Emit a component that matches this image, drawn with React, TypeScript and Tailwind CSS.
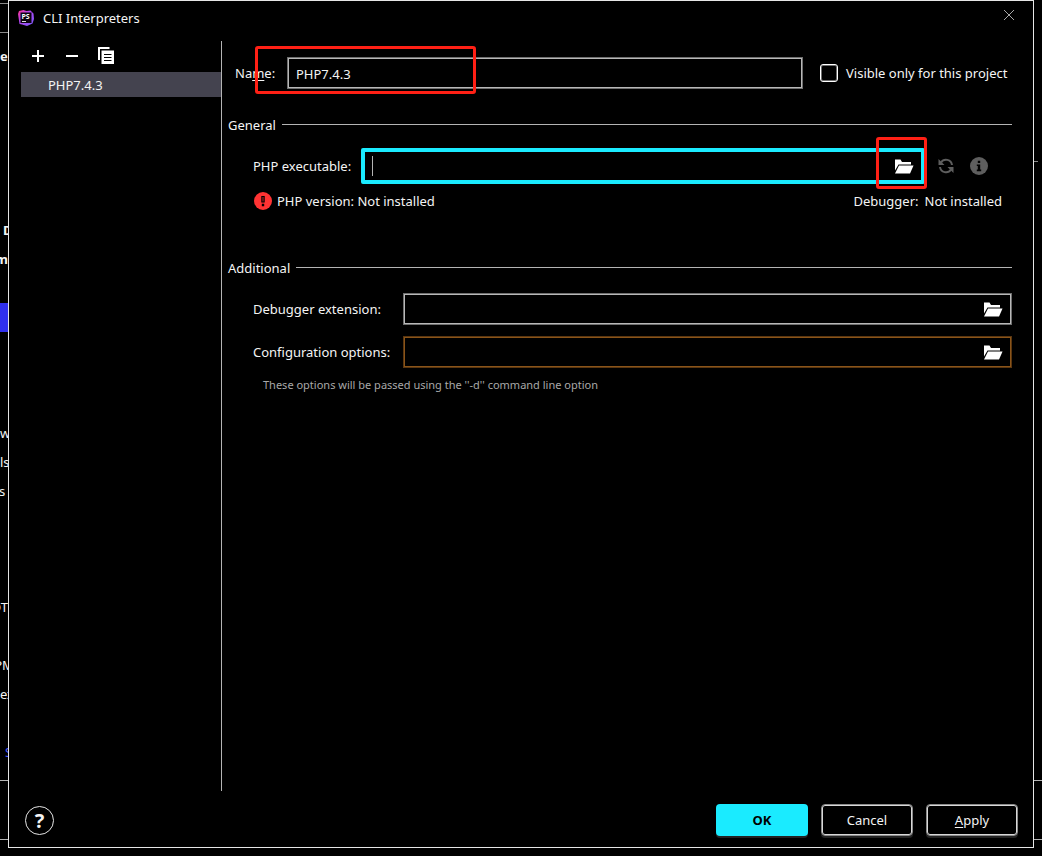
import { useState, type ReactNode } from "react"

interface EditorRow {
  text?: string
  className?: string
}

// visible slice of the settings window that sits behind the dialog
const EDITOR_ROWS: EditorRow[] = [
  { text: "e", className: "font-bold" },
  {}, {}, {}, {}, {},
  { text: "D", className: "pl-[3px] font-bold" },
  { text: "m", className: "justify-end font-bold" },
  {},
  { className: "bg-[#3030ee]" },
  {}, {}, {},
  { text: "w" },
  { text: "ls" },
  { text: "s", className: "justify-center pr-1" },
  {}, {}, {},
  { text: "OT", className: "justify-end" },
  {},
  { text: "PM", className: "justify-center" },
  { text: "ex" },
  {},
  { text: "S", className: "pl-[5px] text-[#4a5cff]" },
]

function PhpStormLogo() {
  return (
    <svg width="16" height="16" viewBox="0 0 16 16" aria-hidden="true">
      <defs>
        <linearGradient id="ps" x1="0" y1="0" x2="1" y2="1">
          <stop offset="0" stopColor="#ff318c" />
          <stop offset="0.4" stopColor="#b345f1" />
          <stop offset="1" stopColor="#765af8" />
        </linearGradient>
      </defs>
      <path d="M1 1 5.5 0l3 1 4-.5 3 3L16 9l-1.5 4.5L9 16l-5-1.5L1.5 14 0 4z" fill="url(#ps)" />
      <rect x="2.5" y="2.5" width="11" height="10.5" fill="#0b0310" />
      <text x="3.4" y="8.6" fontSize="7" fontWeight="700" fontFamily="Open Sans, sans-serif" fill="#fff">PS</text>
      <rect x="4" y="11" width="4" height="1" fill="#ddd" />
    </svg>
  )
}

function FolderIcon() {
  return (
    <svg width="20" height="15" viewBox="0 0 20 15" fill="#fff" aria-hidden="true">
      <path d="M1 .5h5.5l1.5 2.5h9v2.5H4.5L1 11.5z" />
      <path d="M5 6.5h14.5l-3.5 8H1z" />
    </svg>
  )
}

function CopyIcon() {
  return (
    <svg width="16" height="17" viewBox="0 0 16 17" aria-hidden="true">
      <path d="M0 0h11.5v2H2v11H0z" fill="#fff" />
      <path d="M3.5 3.5H16V17H3.5z" fill="#fff" />
      <path d="M6 7.5h7.5M6 10.5h7.5M6 13.5h7.5" stroke="#000" strokeWidth="1" />
    </svg>
  )
}

function RefreshIcon() {
  return (
    <svg width="16" height="16" viewBox="0 0 16 16" fill="none" stroke="#5e5e5e" strokeWidth="2" aria-hidden="true">
      <path d="M3 4.5A6 6 0 0 1 14 7M13 11.5A6 6 0 0 1 2 9" />
      <path d="M.5 1v6h6zM15.5 15V9h-6z" fill="#5e5e5e" stroke="none" />
    </svg>
  )
}

function InfoIcon() {
  return (
    <svg width="18" height="18" viewBox="0 0 18 18" aria-hidden="true">
      <circle cx="9" cy="9" r="9" fill="#5e5e5e" />
      <path d="M7.8 3.8h2.4v2.2H7.8zM6.8 7.4h3.4v5.2h1v1.6H6.8v-1.6h1V9H6.8z" fill="#000" />
    </svg>
  )
}

function ErrorIcon() {
  return (
    <svg width="18" height="18" viewBox="0 0 18 18" aria-hidden="true">
      <circle cx="9" cy="9" r="9" fill="#ff3333" />
      <path d="M7.3 4h3.4v6.4H7.3zM7.8 11.8h2.4v2.4H7.8z" fill="#000" />
      <path d="M8.6 5h.8v4.4h-.8z" fill="#ff3333" />
    </svg>
  )
}

function SectionTitle({ children }: { children: ReactNode }) {
  return (
    <h2 className="flex h-5 items-center gap-[6px]">
      <span className="pt-[2px]">{children}</span>
      <span className="mb-[2px] h-px flex-1 bg-[#b4b4b4]" />
    </h2>
  )
}

interface PathFieldProps {
  id: string
  label: string
  borderClass: string
}

function PathField({ id, label, borderClass }: PathFieldProps) {
  return (
    <div className="flex h-8 items-center pl-[25px]">
      <label htmlFor={id} className="w-[150px] pt-[2px]">{label}</label>
      <div className={`flex h-8 flex-1 items-center border pr-2 ${borderClass}`}>
        <input id={id} className="min-w-0 flex-1 bg-transparent px-2 outline-none" />
        <button type="button" aria-label={`Browse ${label}`}><FolderIcon /></button>
      </div>
    </div>
  )
}

function Highlight({ className }: { className: string }) {
  return <span className={`pointer-events-none absolute z-10 rounded-[3px] border-3 border-[#ff2015] ${className}`} />
}

export default function App() {
  const [name, setName] = useState("PHP7.4.3")
  const [executable, setExecutable] = useState("")
  const [projectOnly, setProjectOnly] = useState(false)

  return (
    <div className="flex min-h-screen bg-black font-['Noto_Sans','Open_Sans',sans-serif] text-[13px] text-[#f4f4f4]">
      <div className="w-2 overflow-hidden pt-[3px]" aria-hidden="true">
        <div className="mb-[9px] h-[30px] border-y border-[#8a8a8a]" />
        {EDITOR_ROWS.map((row, i) => (
          <div key={i} className={`flex h-[29px] items-center ${row.className ?? ""}`}>{row.text}</div>
        ))}
        <div className="mt-[13px] h-[60px] border-y border-[#b4b4b4]" />
      </div>

      <main className="mb-2 flex flex-1 flex-col border border-[#e6e6e6]">
        <header className="flex h-[34px] items-center pr-[18px] pl-[9px]">
          <PhpStormLogo />
          <h1 className="ml-[9px] flex-1 pt-[2px]">CLI Interpreters</h1>
          <button aria-label="Close" className="mb-[6px]">
            <svg width="12" height="12" viewBox="0 0 12 12" stroke="#a8a8a8" aria-hidden="true">
              <path d="m1 1 10 10M11 1 1 11" />
            </svg>
          </button>
        </header>

        <div className="mt-[6px] flex flex-1 pl-3">
          <aside className="w-[201px] border-r border-[#b4b4b4]">
            <div className="flex h-[31px] pb-[2px]">
              <button aria-label="Add" className="flex w-[34px] items-center justify-center">
                <svg width="14" height="14" viewBox="0 0 14 14" stroke="#fff" strokeWidth="2"><path d="M7 1v12M1 7h12" /></svg>
              </button>
              <button aria-label="Remove" className="flex w-[34px] items-center justify-center">
                <svg width="14" height="14" viewBox="0 0 14 14" stroke="#fff" strokeWidth="2"><path d="M1 7h12" /></svg>
              </button>
              <button aria-label="Copy" className="flex w-[34px] items-center justify-center">
                <CopyIcon />
              </button>
            </div>
            <ul>
              <li className="flex h-[25px] items-center bg-[#44434f] pt-[2px] pl-[27px]">{name}</li>
            </ul>
          </aside>

          <form className="flex-1 pt-4 pr-[21px] pl-[6px]">
            <div className="relative flex h-8 items-center pl-[7px]">
              <label htmlFor="name" className="w-[52px] pt-[2px]">Na<u className="underline-offset-2">m</u>e:</label>
              <input
                id="name"
                value={name}
                onChange={(e) => setName(e.target.value)}
                className="h-8 min-w-0 flex-1 border border-[#6e6e6e] bg-transparent px-2 pt-[2px] shadow-[inset_0_0_0_1px_#b8b8b8] outline-none"
              />
              <label className="ml-[17px] flex w-[192px] items-center gap-2 whitespace-nowrap">
                <input
                  type="checkbox"
                  checked={projectOnly}
                  onChange={(e) => setProjectOnly(e.target.checked)}
                  className="size-[18px] appearance-none rounded-[3px] border border-white shadow-[inset_0_0_0_1px_#6e6e6e] checked:bg-[#1aebff]"
                />
                <span className="pt-[2px]">Visible only for this project</span>
              </label>
              <Highlight className="top-[-11px] left-[27px] h-12 w-[221px]" />
            </div>

            <div className="mt-[26px]"><SectionTitle>General</SectionTitle></div>
            <div className="mt-[13px] flex h-9 items-center pl-[25px]">
              <label htmlFor="executable" className="w-[108px] pt-[2px]">PHP executable:</label>
              <div className="relative flex h-9 flex-1 items-center rounded-[2px] border-4 border-[#1aebff] pr-[7px]">
                <input
                  id="executable"
                  autoFocus
                  value={executable}
                  onChange={(e) => setExecutable(e.target.value)}
                  className="min-w-0 flex-1 bg-transparent px-[7px] caret-transparent outline-none"
                />
                {executable === "" && <span className="absolute left-[7px] h-5 w-px bg-[#b4b4b4]" />}
                <button type="button" aria-label="Browse PHP executable"><FolderIcon /></button>
                <Highlight className="top-[-15px] right-[-6px] h-[52px] w-[51px]" />
              </div>
              <div className="flex w-[87px] items-center gap-4 pl-[13px]">
                <button type="button" aria-label="Reload"><RefreshIcon /></button>
                <button type="button" aria-label="Info"><InfoIcon /></button>
              </div>
            </div>
            <div className="mt-[7px] flex h-5 items-center pr-[10px] pl-[26px]">
              <ErrorIcon />
              <span className="ml-[5px] flex-1 pt-[2px]">PHP version: Not installed</span>
              <span className="mr-[6px] pt-[2px]">Debugger:</span>
              <span className="pt-[2px]">Not installed</span>
            </div>

            <div className="mt-[47px]"><SectionTitle>Additional</SectionTitle></div>
            <div className="mt-[15px] flex flex-col gap-[11px]">
              <PathField
                id="extension"
                label="Debugger extension:"
                borderClass="border-[#6e6e6e] shadow-[inset_0_0_0_1px_#b8b8b8]"
              />
              <PathField
                id="options"
                label="Configuration options:"
                borderClass="border-[#5a3610] shadow-[inset_0_0_0_1px_#8a5419]"
              />
            </div>
            <p className="mt-[9px] pl-[35px] text-[11px] leading-4 text-[#a8a8a8]">
              These options will be passed using the ''-d'' command line option
            </p>
          </form>
        </div>

        <footer className="flex h-14 items-start gap-[13px] pt-[13px] pr-[15px] pl-4">
          <button aria-label="Help" className="mt-[2px] mr-auto flex size-[29px] items-center justify-center rounded-full border border-[#e6e6e6] text-xl font-bold">?</button>
          <button className="h-8 w-[92px] rounded bg-[#1aebff] pt-[2px] font-bold text-black shadow-[0_2px_0_#222]">OK</button>
          <button className="h-8 w-[92px] rounded border border-[#8a8a8a] pt-[2px] shadow-[inset_0_0_0_1px_#d8d8d8,0_2px_0_#222]">Cancel</button>
          <button className="h-8 w-[92px] rounded border border-[#8a8a8a] pt-[2px] shadow-[inset_0_0_0_1px_#d8d8d8,0_2px_0_#222]"><u className="underline-offset-2">A</u>pply</button>
        </footer>
      </main>

      <div className="w-2 pt-[161px]" aria-hidden="true">
        <div className="h-px w-1 bg-[#8a8a8a]" />
        <div className="mt-[618px] h-[60px] border-y border-[#b4b4b4]" />
      </div>
    </div>
  )
}
